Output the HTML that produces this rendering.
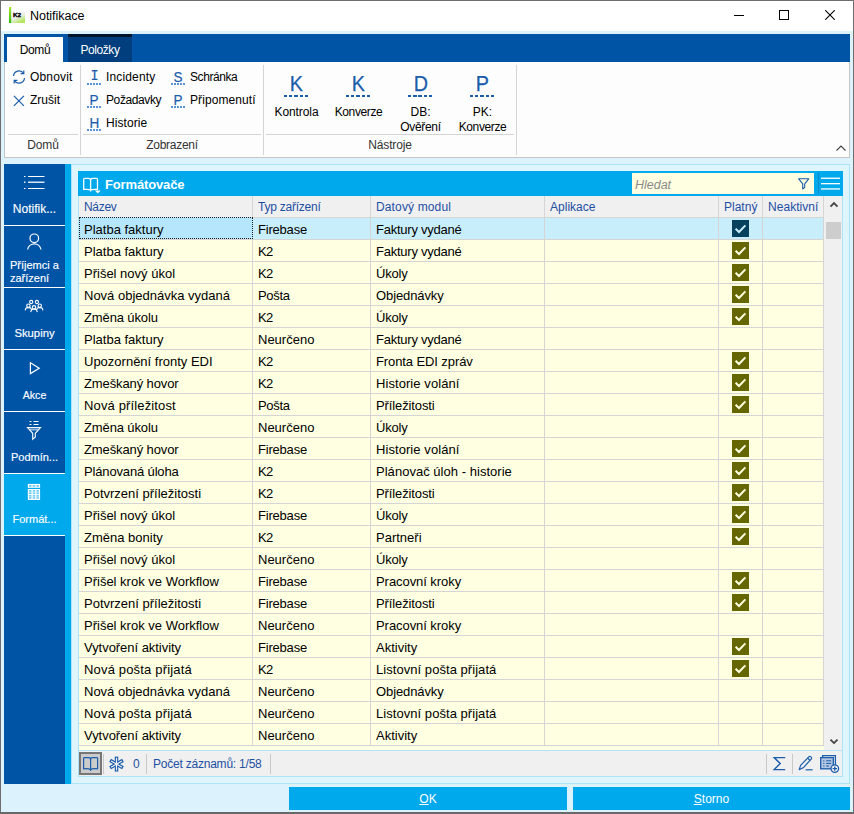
<!DOCTYPE html>
<html lang="cs"><head><meta charset="utf-8"><title>Notifikace</title>
<style>
html,body{margin:0;padding:0;}
body{width:854px;height:814px;overflow:hidden;background:#dcf3fd;font-family:"Liberation Sans",sans-serif;font-size:12px;color:#000;}
#win{position:absolute;left:0;top:0;width:854px;height:814px;background:#dcf3fd;overflow:hidden;}
#win div,#win svg,#win .chk{position:absolute;box-sizing:border-box;}
.t{white-space:nowrap;line-height:14px;}
#bL{left:0;top:0;width:1px;height:814px;background:#6e6e6e;}
#bT{left:0;top:0;width:854px;height:1px;background:#6e6e6e;}
#bR{left:853px;top:0;width:1px;height:814px;background:#6e6e6e;}
#bB{left:0;top:812px;width:854px;height:2px;background:#686868;}
#title{left:1px;top:1px;width:852px;height:30px;background:#fff;}
#ribbar{left:4px;top:34px;width:846px;height:28px;background:#0054a6;}
#tab1{left:3px;top:3px;width:56px;height:25px;background:#fdfdfd;}
#tab2{left:64px;top:0;width:64px;height:28px;background:#003e7e;border-top:3px solid #00142c;}
#ribbon{left:4px;top:62px;width:846px;height:96px;background:#fdfdfd;border:1px solid #c6c6c6;border-top:none;}
.rt{white-space:nowrap;line-height:14px;font-size:12px;color:#000;}
.li{color:#1b5cab;font-size:15px;line-height:14px;width:15px;text-align:center;height:18px;padding-top:2.6px;-webkit-text-stroke:0.2px #1b5cab;background:repeating-linear-gradient(90deg,#5b92d6 0 2px,transparent 2px 3px) left bottom/14px 2px no-repeat;}
.big{top:9px;color:#1b5cab;font-size:22px;line-height:22px;width:25px;text-align:center;height:26px;padding-top:2px;background:repeating-linear-gradient(90deg,#1b5cab 0 3.25px,transparent 3.25px 5.25px) left bottom/24.25px 2px no-repeat;-webkit-text-stroke:0.25px #1b5cab;}
.hs{height:1px;background:#d4d4d4;}
.vs{width:1px;background:#d4d4d4;}
.gl{font-size:12px;color:#333;text-align:center;line-height:14px;white-space:nowrap;}
#side{left:4px;top:164px;width:61px;height:620px;background:#0054a6;}
#sstrip{left:65px;top:164px;width:6px;height:620px;background:#00a8ec;}
.si{left:0;width:61px;height:61px;}
.si.act{background:#00a8ec;}
.ssep{left:0;width:61px;height:1px;background:#fff;}
.sl{left:0;width:61px;text-align:center;color:#fff;-webkit-text-stroke:0.15px #fff;font-size:11.5px;line-height:13px;white-space:nowrap;}
#panel{left:71px;top:164px;width:779px;height:620px;background:#dff5fd;border:1px solid #aee3f8;}
#phead{left:78px;top:171px;width:765px;height:25px;background:#00a8ec;}
#ptitle{left:27px;top:6px;color:#fff;font-weight:bold;font-size:13px;line-height:15px;white-space:nowrap;}
#search{left:554px;top:2px;width:182px;height:21px;background:#ffffe1;}
#search .ph{left:3px;top:5px;font-style:italic;color:#8a8a8a;font-size:12.5px;line-height:15px;}
#grid{left:79px;top:196px;width:745px;height:554px;background:#ffffe1;overflow:hidden;font-size:13px;}
#gl{left:78px;top:196px;width:1px;height:555px;background:#aee3f8;}
.hrow{left:0;top:0;width:745px;height:22px;background:#f0f0f0;border-bottom:1px solid #d5d5d5;}
.hc{top:0;height:21px;border-right:1px solid #d5d5d5;color:#1d4fa3;font-size:12px;line-height:23px;padding-left:5px;white-space:nowrap;overflow:hidden;}
.row{left:0;width:745px;height:22px;border-bottom:1px solid #d5d5d5;}
.row.sel{background:#c9eefb;}
.c{top:0;height:21px;border-right:1px solid #d5d5d5;line-height:23px;padding-left:5px;white-space:nowrap;overflow:hidden;}
.c1{left:0;width:174px;}
.c2{left:174px;width:118px;}
.c3{left:292px;width:174px;}
.c4{left:466px;width:174px;}
.c5{left:640px;width:44px;}
.c6{left:684px;width:61px;}
.chk{left:13px;top:2px;width:17px;height:17px;background:#666600;color:#ffffe1;}
.row.sel .chk{background:#06425e;color:#c9eefb;}
.focus{left:0;top:21px;width:174px;height:22px;border:1px dotted #222;background:#b5e6fb;}
#vscroll{left:824px;top:196px;width:18px;height:554px;background:#f0f0f0;}
#vsb{left:842px;top:196px;width:1px;height:581px;background:#aee3f8;}
#thumb{left:2px;top:26px;width:15px;height:17px;background:#cdcdcd;}
#status{left:78px;top:750px;width:765px;height:27px;background:#f0f0f0;border:1px solid #aee3f8;}
.st{color:#1d4fa3;font-size:12px;line-height:14px;white-space:nowrap;}
.btn{top:787px;height:23px;background:#00a8ec;color:#fff;text-align:center;font-size:12px;line-height:25.5px;}
.vs2{top:3px;width:1px;height:20px;background:#c8c8c8;}
.ft{left:4px;top:0;line-height:23px;white-space:nowrap;}
.lx{display:inline-block;transform:scaleX(0.9);}

</style></head><body>
<div id="win">
<div id="bL"></div><div id="bT"></div><div id="bR"></div><div id="bB"></div>
<div id="title">
  <svg style="left:8px;top:6px" width="17" height="17" viewBox="0 0 17 17"><defs><linearGradient id="kg" x1="0" y1="0" x2="0" y2="1"><stop offset="0" stop-color="#a6e632"/><stop offset="1" stop-color="#34bc0e"/></linearGradient><linearGradient id="kb" x1="0" y1="0" x2="0.6" y2="1"><stop offset="0" stop-color="#ffffff"/><stop offset="0.55" stop-color="#efefef"/><stop offset="1" stop-color="#b4e65a"/></linearGradient></defs><rect x="2" y="4.5" width="14" height="11.5" fill="url(#kb)"/><rect x="0" y="0" width="2.2" height="16" fill="url(#kg)"/><text x="3.9" y="9.9" font-family="Liberation Sans, sans-serif" font-size="6.2" font-weight="bold" fill="#000" stroke="#000" stroke-width="0.35" textLength="8.2" lengthAdjust="spacingAndGlyphs">K2</text></svg>
  <div class="t" style="left:29px;top:8px;font-size:12.5px;line-height:15px;"><span style="letter-spacing:-0.04px">Notifikace</span></div>
  <svg style="left:733px;top:14px" width="12" height="2"><rect width="10" height="1" fill="#000"/></svg>
  <svg style="left:778px;top:9px" width="10" height="10"><rect x="0.5" y="0.5" width="9" height="9" fill="none" stroke="#000"/></svg>
  <svg style="left:824px;top:9px" width="10" height="10"><path d="M0.3 0.3 L9.7 9.7 M9.7 0.3 L0.3 9.7" stroke="#000" stroke-width="1.1" fill="none"/></svg>
</div>
<div id="ribbar">
  <div id="tab1"><div class="t" style="left:0;width:56px;text-align:center;top:6px;font-size:12px;"><span style="letter-spacing:-0.38px">Domů</span></div></div>
  <div id="tab2"><div class="t" style="left:0;width:64px;text-align:center;top:6px;font-size:12px;color:#fff;"><span style="letter-spacing:-0.43px">Položky</span></div></div>
</div>
<div id="ribbon">
  <!-- group Domu -->
  <svg style="left:7px;top:8px" width="14" height="14" viewBox="0 0 14 14"><path d="M1.5 6 A5.5 5.5 0 0 1 11.5 3.2 M12.5 8 A5.5 5.5 0 0 1 2.5 10.8" fill="none" stroke="#1b5cab" stroke-width="1.2"/><path d="M11.8 0.5 V3.6 H8.6 M2.2 13.5 V10.4 H5.4" fill="none" stroke="#1b5cab" stroke-width="1.2"/></svg>
  <div class="rt" style="left:25px;top:8px;"><span style="letter-spacing:0.16px">Obnovit</span></div>
  <svg style="left:8px;top:33px" width="12" height="12" viewBox="0 0 12 12"><path d="M0.9 0.9 L10.9 10.9 M10.9 0.9 L0.9 10.9" stroke="#1b5cab" stroke-width="1.2" fill="none"/></svg>
  <div class="rt" style="left:25px;top:31px;"><span style="letter-spacing:0.0px">Zrušit</span></div>
  <div class="hs" style="left:3px;top:72px;width:70px;"></div>
  <div class="gl" style="left:3px;top:76px;width:70px;"><span style="letter-spacing:-0.1px">Domů</span></div>
  <div class="vs" style="left:75px;top:3px;height:90px;"></div>
  <!-- group Zobrazeni -->
  <div class="li" style="left:82px;top:5px;font-family:'Liberation Mono',monospace;"><span class="lx">I</span></div>
  <div class="rt" style="left:101px;top:8px;"><span style="letter-spacing:0.15px">Incidenty</span></div>
  <div class="li" style="left:82px;top:28px;"><span class="lx">P</span></div>
  <div class="rt" style="left:101px;top:31px;"><span style="letter-spacing:-0.39px">Požadavky</span></div>
  <div class="li" style="left:82px;top:51px;"><span class="lx">H</span></div>
  <div class="rt" style="left:101px;top:54px;"><span style="letter-spacing:0.08px">Historie</span></div>
  <div class="li" style="left:166px;top:5px;"><span class="lx">S</span></div>
  <div class="rt" style="left:185px;top:8px;"><span style="letter-spacing:-0.43px">Schránka</span></div>
  <div class="li" style="left:166px;top:28px;"><span class="lx">P</span></div>
  <div class="rt" style="left:185px;top:31px;"><span style="letter-spacing:0.08px">Připomenutí</span></div>
  <div class="hs" style="left:78px;top:72px;width:178px;"></div>
  <div class="gl" style="left:78px;top:76px;width:178px;"><span style="letter-spacing:-0.27px">Zobrazení</span></div>
  <div class="vs" style="left:258px;top:3px;height:90px;"></div>
  <!-- group Nastroje -->
  <div class="big" style="left:279px;"><span class="lx">K</span></div>
  <div class="rt" style="left:260px;top:43px;width:63px;text-align:center;"><span style="letter-spacing:-0.08px">Kontrola</span></div>
  <div class="big" style="left:341px;"><span class="lx">K</span></div>
  <div class="rt" style="left:322px;top:43px;width:63px;text-align:center;"><span style="letter-spacing:-0.39px">Konverze</span></div>
  <div class="big" style="left:403px;"><span class="lx">D</span></div>
  <div class="rt" style="left:384px;top:43px;width:63px;text-align:center;line-height:15px;">DB:<br><span style="letter-spacing:-0.31px">Ověření</span></div>
  <div class="big" style="left:465px;"><span class="lx">P</span></div>
  <div class="rt" style="left:446px;top:43px;width:63px;text-align:center;line-height:15px;">PK:<br><span style="letter-spacing:-0.39px">Konverze</span></div>
  <div class="hs" style="left:261px;top:72px;width:248px;"></div>
  <div class="gl" style="left:261px;top:76px;width:248px;"><span style="letter-spacing:-0.17px">Nástroje</span></div>
  <div class="vs" style="left:511px;top:3px;height:90px;"></div>
  <svg style="left:831px;top:83px" width="10" height="6" viewBox="0 0 10 6"><path d="M0.5 5.5 L5 1 L9.5 5.5" fill="none" stroke="#444" stroke-width="1.1"/></svg>
</div>
<div id="side">
  <div class="si" style="top:0"></div><div class="ssep" style="top:61px"></div>
  <div class="si" style="top:62px"></div><div class="ssep" style="top:123px"></div>
  <div class="si" style="top:124px"></div><div class="ssep" style="top:185px"></div>
  <div class="si" style="top:186px"></div><div class="ssep" style="top:247px"></div>
  <div class="si" style="top:248px"></div><div class="ssep" style="top:309px"></div>
  <div class="si act" style="top:310px"></div><div class="ssep" style="top:371px"></div>
  <!-- list icon -->
  <svg style="left:19px;top:10px" width="24" height="16" viewBox="0 0 24 16"><g fill="#fff"><rect x="1" y="2" width="1.5" height="1"/><rect x="5" y="2" width="16.5" height="1"/><rect x="1" y="7.5" width="1.5" height="1.5" opacity=".85"/><rect x="5" y="7.5" width="16.5" height="1.5" opacity=".85"/><rect x="1" y="14" width="1.5" height="1"/><rect x="5" y="14" width="16.5" height="1"/></g></svg>
  <div class="sl" style="top:39px;font-size:12px;">Notifik...</div>
  <!-- person -->
  <svg style="left:20px;top:66px" width="22" height="22" viewBox="0 0 22 22"><circle cx="10.3" cy="8.3" r="4.3" fill="none" stroke="#fff" stroke-width="1.2"/><path d="M3.6 19.5 A6.8 6.8 0 0 1 17 19.5" fill="none" stroke="#fff" stroke-width="1.2"/></svg>
  <div class="sl" style="top:95px;text-align:left;left:6px;font-size:11px;">Příjemci a<br>zařízení</div>
  <!-- group -->
  <svg style="left:20px;top:134px" width="22" height="16" viewBox="0 0 22 16"><g fill="none" stroke="#fff" stroke-width="1.1"><circle cx="7.2" cy="4" r="1.6"/><circle cx="12.9" cy="4" r="1.6"/><circle cx="4.4" cy="7.7" r="1.7"/><path d="M1.1000000000000005 12.4 C1.8000000000000003 9.8 2.0000000000000004 9.6 4.4 9.6 C6.800000000000001 9.6 7.0 9.8 7.7 12.4"/><circle cx="15.7" cy="7.7" r="1.7"/><path d="M12.399999999999999 12.4 C13.1 9.8 13.299999999999999 9.6 15.7 9.6 C18.099999999999998 9.6 18.3 9.8 19.0 12.4"/><circle cx="10" cy="9.3" r="1.7"/><path d="M6.7 14.2 C7.4 11.6 7.6 11.200000000000001 10 11.200000000000001 C12.4 11.200000000000001 12.6 11.6 13.3 14.2"/></g></svg>
  <div class="sl" style="top:163px;font-size:11.3px;">Skupiny</div>
  <!-- play -->
  <svg style="left:24px;top:196px" width="14" height="16" viewBox="0 0 14 16"><path d="M2.4 2.8 L11.2 8.2 L2.4 13.6 Z" fill="none" stroke="#fff" stroke-width="1.2" stroke-linejoin="miter"/></svg>
  <div class="sl" style="top:225px;font-size:10.6px;">Akce</div>
  <!-- filter -->
  <svg style="left:22px;top:255px" width="16" height="22" viewBox="0 0 16 22"><g fill="#fff"><rect x="3.5" y="2" width="2" height="1"/><rect x="7.5" y="2" width="5" height="1"/><rect x="3.5" y="5" width="2" height="1"/><rect x="7.5" y="5" width="5" height="1"/></g><path d="M1.5 8.5 H14.5 L9.3 14.3 V18 L6.7 20.2 V14.3 Z" fill="none" stroke="#fff" stroke-width="1.1"/><path d="M2.8 9.5 H13.2 L11.4 11.5 H4.6 Z" fill="#fff" opacity=".6"/></svg>
  <div class="sl" style="top:287px;font-size:11px;">Podmín...</div>
  <!-- table -->
  <svg style="left:23px;top:319px" width="15" height="18" viewBox="0 0 15 18"><rect x="0.8" y="0.9" width="12.3" height="3.9" fill="#fff"/><rect x="0.8" y="6" width="12.3" height="11" fill="#fff"/><g fill="#00a8ec"><rect x="2.0" y="2" width="2.5" height="1.8" opacity=".6"/><rect x="2.0" y="7" width="2.5" height="1.8" opacity=".55"/><rect x="2.0" y="9.6" width="2.5" height="1" opacity=".95"/><rect x="2.0" y="11.9" width="2.5" height="1.8" opacity=".55"/><rect x="2.0" y="14.5" width="2.5" height="1" opacity=".95"/><rect x="5.7" y="2" width="2.5" height="1.8" opacity=".6"/><rect x="5.7" y="7" width="2.5" height="1.8" opacity=".55"/><rect x="5.7" y="9.6" width="2.5" height="1" opacity=".95"/><rect x="5.7" y="11.9" width="2.5" height="1.8" opacity=".55"/><rect x="5.7" y="14.5" width="2.5" height="1" opacity=".95"/><rect x="9.4" y="2" width="2.5" height="1.8" opacity=".6"/><rect x="9.4" y="7" width="2.5" height="1.8" opacity=".55"/><rect x="9.4" y="9.6" width="2.5" height="1" opacity=".95"/><rect x="9.4" y="11.9" width="2.5" height="1.8" opacity=".55"/><rect x="9.4" y="14.5" width="2.5" height="1" opacity=".95"/></g></svg>
  <div class="sl" style="top:349px;font-size:11px;">Formát...</div>
</div>
<div id="sstrip"></div>
<div id="panel"></div>
<div id="phead">
  <svg style="left:4px;top:5px" width="20" height="19" viewBox="0 0 20 19"><path d="M1.7 3.4 C1.7 2.8 2.1 2.4 2.7 2.4 H6.6 C7.8 2.4 8.6 3.2 8.6 4.4 V14 C7.6 13.3 6 13.2 1.7 13.4 Z M8.6 4.4 C8.6 3.2 9.4 2.4 10.6 2.4 H14.5 C15.1 2.4 15.5 2.8 15.5 3.4 V13.4 C11.2 13.2 9.6 13.3 8.6 14 M8.6 14 V15.4" fill="none" stroke="#fff" stroke-width="1.3" stroke-linejoin="round"/><path d="M12.9 14.5 H18.7 L15.8 17.6 Z" fill="#fff"/></svg>
  <div id="ptitle"><span style="letter-spacing:-0.14px">Formátovače</span></div>
  <div id="search"><div class="ph"><span style="letter-spacing:-0.02px">Hledat</span></div>
    <svg style="left:165px;top:4px" width="13" height="13" viewBox="0 0 13 13"><path d="M1.7 1.8 H11.7 L7.7 6.8 V10.4 L5.7 12 V6.8 Z" fill="none" stroke="#1b5cab" stroke-width="1.1" stroke-linejoin="round"/></svg>
  </div>
  <div style="left:740px;top:2px;width:1px;height:21px;background:#0c8acb"></div>
  <svg style="left:743px;top:6px" width="20" height="14" viewBox="0 0 20 14"><g fill="#fff"><rect x="0" y="0.6" width="19" height="1.3"/><rect x="0" y="6" width="19" height="1.3"/><rect x="0" y="11.3" width="19" height="1.3"/></g></svg>
</div>
<div id="grid">
<div class="hrow"><div class="hc" style="left:0;width:174px"><span style="letter-spacing:-0.3px">Název</span></div><div class="hc" style="left:174px;width:118px"><span style="letter-spacing:-0.24px">Typ zařízení</span></div><div class="hc" style="left:292px;width:174px"><span style="letter-spacing:0.14px">Datový modul</span></div><div class="hc" style="left:466px;width:174px"><span style="letter-spacing:0.02px">Aplikace</span></div><div class="hc" style="left:640px;width:44px"><span style="letter-spacing:0.01px">Platný</span></div><div class="hc" style="left:684px;width:61px"><span style="letter-spacing:0.05px">Neaktivní</span></div></div>
<div class="row sel" style="top:22px"><div class="c c1">Platba faktury</div><div class="c c2"><span style="letter-spacing:-0.2px">Firebase</span></div><div class="c c3"><span style="letter-spacing:-0.24px">Faktury vydané</span></div><div class="c c4"></div><div class="c c5"><span class="chk"><svg viewBox="0 0 17 17" width="17" height="17"><path d="M3.6 8.8 L7 12 L13.4 5.4" fill="none" stroke="currentColor" stroke-width="2"/></svg></span></div><div class="c c6"></div></div>
<div class="row" style="top:44px"><div class="c c1">Platba faktury</div><div class="c c2"><span style="letter-spacing:-0.65px">K2</span></div><div class="c c3"><span style="letter-spacing:-0.24px">Faktury vydané</span></div><div class="c c4"></div><div class="c c5"><span class="chk"><svg viewBox="0 0 17 17" width="17" height="17"><path d="M3.6 8.8 L7 12 L13.4 5.4" fill="none" stroke="currentColor" stroke-width="2"/></svg></span></div><div class="c c6"></div></div>
<div class="row" style="top:66px"><div class="c c1">Přišel nový úkol</div><div class="c c2"><span style="letter-spacing:-0.65px">K2</span></div><div class="c c3"><span style="letter-spacing:-0.2px">Úkoly</span></div><div class="c c4"></div><div class="c c5"><span class="chk"><svg viewBox="0 0 17 17" width="17" height="17"><path d="M3.6 8.8 L7 12 L13.4 5.4" fill="none" stroke="currentColor" stroke-width="2"/></svg></span></div><div class="c c6"></div></div>
<div class="row" style="top:88px"><div class="c c1">Nová objednávka vydaná</div><div class="c c2"><span style="letter-spacing:-0.32px">Pošta</span></div><div class="c c3"><span style="letter-spacing:-0.1px">Objednávky</span></div><div class="c c4"></div><div class="c c5"><span class="chk"><svg viewBox="0 0 17 17" width="17" height="17"><path d="M3.6 8.8 L7 12 L13.4 5.4" fill="none" stroke="currentColor" stroke-width="2"/></svg></span></div><div class="c c6"></div></div>
<div class="row" style="top:110px"><div class="c c1"><span style="letter-spacing:-0.12px">Změna úkolu</span></div><div class="c c2"><span style="letter-spacing:-0.65px">K2</span></div><div class="c c3"><span style="letter-spacing:-0.2px">Úkoly</span></div><div class="c c4"></div><div class="c c5"><span class="chk"><svg viewBox="0 0 17 17" width="17" height="17"><path d="M3.6 8.8 L7 12 L13.4 5.4" fill="none" stroke="currentColor" stroke-width="2"/></svg></span></div><div class="c c6"></div></div>
<div class="row" style="top:132px"><div class="c c1">Platba faktury</div><div class="c c2">Neurčeno</div><div class="c c3"><span style="letter-spacing:-0.24px">Faktury vydané</span></div><div class="c c4"></div><div class="c c5"></div><div class="c c6"></div></div>
<div class="row" style="top:154px"><div class="c c1">Upozornění fronty EDI</div><div class="c c2"><span style="letter-spacing:-0.65px">K2</span></div><div class="c c3"><span style="letter-spacing:-0.1px">Fronta EDI zpráv</span></div><div class="c c4"></div><div class="c c5"><span class="chk"><svg viewBox="0 0 17 17" width="17" height="17"><path d="M3.6 8.8 L7 12 L13.4 5.4" fill="none" stroke="currentColor" stroke-width="2"/></svg></span></div><div class="c c6"></div></div>
<div class="row" style="top:176px"><div class="c c1"><span style="letter-spacing:-0.11px">Zmeškaný hovor</span></div><div class="c c2"><span style="letter-spacing:-0.65px">K2</span></div><div class="c c3"><span style="letter-spacing:0.07px">Historie volání</span></div><div class="c c4"></div><div class="c c5"><span class="chk"><svg viewBox="0 0 17 17" width="17" height="17"><path d="M3.6 8.8 L7 12 L13.4 5.4" fill="none" stroke="currentColor" stroke-width="2"/></svg></span></div><div class="c c6"></div></div>
<div class="row" style="top:198px"><div class="c c1"><span style="letter-spacing:0.14px">Nová příležitost</span></div><div class="c c2"><span style="letter-spacing:-0.32px">Pošta</span></div><div class="c c3"><span style="letter-spacing:-0.11px">Příležitosti</span></div><div class="c c4"></div><div class="c c5"><span class="chk"><svg viewBox="0 0 17 17" width="17" height="17"><path d="M3.6 8.8 L7 12 L13.4 5.4" fill="none" stroke="currentColor" stroke-width="2"/></svg></span></div><div class="c c6"></div></div>
<div class="row" style="top:220px"><div class="c c1"><span style="letter-spacing:-0.12px">Změna úkolu</span></div><div class="c c2">Neurčeno</div><div class="c c3"><span style="letter-spacing:-0.2px">Úkoly</span></div><div class="c c4"></div><div class="c c5"></div><div class="c c6"></div></div>
<div class="row" style="top:242px"><div class="c c1"><span style="letter-spacing:-0.11px">Zmeškaný hovor</span></div><div class="c c2"><span style="letter-spacing:-0.2px">Firebase</span></div><div class="c c3"><span style="letter-spacing:0.07px">Historie volání</span></div><div class="c c4"></div><div class="c c5"><span class="chk"><svg viewBox="0 0 17 17" width="17" height="17"><path d="M3.6 8.8 L7 12 L13.4 5.4" fill="none" stroke="currentColor" stroke-width="2"/></svg></span></div><div class="c c6"></div></div>
<div class="row" style="top:264px"><div class="c c1"><span style="letter-spacing:-0.15px">Plánovaná úloha</span></div><div class="c c2"><span style="letter-spacing:-0.65px">K2</span></div><div class="c c3"><span style="letter-spacing:0.03px">Plánovač úloh - historie</span></div><div class="c c4"></div><div class="c c5"><span class="chk"><svg viewBox="0 0 17 17" width="17" height="17"><path d="M3.6 8.8 L7 12 L13.4 5.4" fill="none" stroke="currentColor" stroke-width="2"/></svg></span></div><div class="c c6"></div></div>
<div class="row" style="top:286px"><div class="c c1">Potvrzení příležitosti</div><div class="c c2"><span style="letter-spacing:-0.65px">K2</span></div><div class="c c3"><span style="letter-spacing:-0.11px">Příležitosti</span></div><div class="c c4"></div><div class="c c5"><span class="chk"><svg viewBox="0 0 17 17" width="17" height="17"><path d="M3.6 8.8 L7 12 L13.4 5.4" fill="none" stroke="currentColor" stroke-width="2"/></svg></span></div><div class="c c6"></div></div>
<div class="row" style="top:308px"><div class="c c1">Přišel nový úkol</div><div class="c c2"><span style="letter-spacing:-0.2px">Firebase</span></div><div class="c c3"><span style="letter-spacing:-0.2px">Úkoly</span></div><div class="c c4"></div><div class="c c5"><span class="chk"><svg viewBox="0 0 17 17" width="17" height="17"><path d="M3.6 8.8 L7 12 L13.4 5.4" fill="none" stroke="currentColor" stroke-width="2"/></svg></span></div><div class="c c6"></div></div>
<div class="row" style="top:330px"><div class="c c1">Změna bonity</div><div class="c c2"><span style="letter-spacing:-0.65px">K2</span></div><div class="c c3">Partneři</div><div class="c c4"></div><div class="c c5"><span class="chk"><svg viewBox="0 0 17 17" width="17" height="17"><path d="M3.6 8.8 L7 12 L13.4 5.4" fill="none" stroke="currentColor" stroke-width="2"/></svg></span></div><div class="c c6"></div></div>
<div class="row" style="top:352px"><div class="c c1">Přišel nový úkol</div><div class="c c2">Neurčeno</div><div class="c c3"><span style="letter-spacing:-0.2px">Úkoly</span></div><div class="c c4"></div><div class="c c5"></div><div class="c c6"></div></div>
<div class="row" style="top:374px"><div class="c c1">Přišel krok ve Workflow</div><div class="c c2"><span style="letter-spacing:-0.2px">Firebase</span></div><div class="c c3"><span style="letter-spacing:-0.06px">Pracovní kroky</span></div><div class="c c4"></div><div class="c c5"><span class="chk"><svg viewBox="0 0 17 17" width="17" height="17"><path d="M3.6 8.8 L7 12 L13.4 5.4" fill="none" stroke="currentColor" stroke-width="2"/></svg></span></div><div class="c c6"></div></div>
<div class="row" style="top:396px"><div class="c c1">Potvrzení příležitosti</div><div class="c c2"><span style="letter-spacing:-0.2px">Firebase</span></div><div class="c c3"><span style="letter-spacing:-0.11px">Příležitosti</span></div><div class="c c4"></div><div class="c c5"><span class="chk"><svg viewBox="0 0 17 17" width="17" height="17"><path d="M3.6 8.8 L7 12 L13.4 5.4" fill="none" stroke="currentColor" stroke-width="2"/></svg></span></div><div class="c c6"></div></div>
<div class="row" style="top:418px"><div class="c c1">Přišel krok ve Workflow</div><div class="c c2">Neurčeno</div><div class="c c3"><span style="letter-spacing:-0.06px">Pracovní kroky</span></div><div class="c c4"></div><div class="c c5"></div><div class="c c6"></div></div>
<div class="row" style="top:440px"><div class="c c1"><span style="letter-spacing:-0.04px">Vytvoření aktivity</span></div><div class="c c2"><span style="letter-spacing:-0.2px">Firebase</span></div><div class="c c3">Aktivity</div><div class="c c4"></div><div class="c c5"><span class="chk"><svg viewBox="0 0 17 17" width="17" height="17"><path d="M3.6 8.8 L7 12 L13.4 5.4" fill="none" stroke="currentColor" stroke-width="2"/></svg></span></div><div class="c c6"></div></div>
<div class="row" style="top:462px"><div class="c c1"><span style="letter-spacing:0.17px">Nová pošta přijatá</span></div><div class="c c2"><span style="letter-spacing:-0.65px">K2</span></div><div class="c c3"><span style="letter-spacing:0.05px">Listovní pošta přijatá</span></div><div class="c c4"></div><div class="c c5"><span class="chk"><svg viewBox="0 0 17 17" width="17" height="17"><path d="M3.6 8.8 L7 12 L13.4 5.4" fill="none" stroke="currentColor" stroke-width="2"/></svg></span></div><div class="c c6"></div></div>
<div class="row" style="top:484px"><div class="c c1">Nová objednávka vydaná</div><div class="c c2">Neurčeno</div><div class="c c3"><span style="letter-spacing:-0.1px">Objednávky</span></div><div class="c c4"></div><div class="c c5"></div><div class="c c6"></div></div>
<div class="row" style="top:506px"><div class="c c1"><span style="letter-spacing:0.17px">Nová pošta přijatá</span></div><div class="c c2">Neurčeno</div><div class="c c3"><span style="letter-spacing:0.05px">Listovní pošta přijatá</span></div><div class="c c4"></div><div class="c c5"></div><div class="c c6"></div></div>
<div class="row" style="top:528px"><div class="c c1"><span style="letter-spacing:-0.04px">Vytvoření aktivity</span></div><div class="c c2">Neurčeno</div><div class="c c3">Aktivity</div><div class="c c4"></div><div class="c c5"></div><div class="c c6"></div></div>
<div class="focus"><div class="ft">Platba faktury</div></div>
</div><div id="vscroll"><div id="thumb"></div>
  <svg style="left:5px;top:4px" width="10" height="8" viewBox="0 0 10 8"><path d="M1.5 6.6 L5 3.1 L8.5 6.6" fill="none" stroke="#444" stroke-width="1.8"/></svg>
  <svg style="left:5px;top:542px" width="10" height="8" viewBox="0 0 10 8"><path d="M1.5 1.6 L5 5.1 L8.5 1.6" fill="none" stroke="#444" stroke-width="1.8"/></svg>
</div>
<div id="vsb"></div><div id="gl"></div>
<div id="status">
  <div style="left:0px;top:1px;width:23px;height:23px;background:#cbcbcb;border:2px solid #767676;"></div>
  <svg style="left:3px;top:5px" width="18" height="16" viewBox="0 0 18 16"><path d="M1.6 2.4 C1.6 1.8 2 1.6 2.6 1.6 H6.4 C7.6 1.6 8.6 2.2 8.6 3.4 V13.6 C7.4 12.6 4 12.6 1.6 12.8 Z M8.6 3.4 C8.6 2.2 9.6 1.6 10.8 1.6 H14.6 C15.2 1.6 15.6 1.8 15.6 2.4 V12.8 C13.2 12.6 9.8 12.6 8.6 13.6 M8.6 13.6 V15" fill="none" stroke="#1b5cab" stroke-width="1.2" stroke-linejoin="round"/></svg>
  <div class="vs2" style="left:24px;"></div>
  <svg style="left:29px;top:5px" width="17" height="17" viewBox="0 0 17 17"><g transform="translate(8.5,8.1)"><g fill="#1b5cab" stroke="#1b5cab" stroke-width="2.3" stroke-linejoin="miter"><rect x="-0.6" y="-6.3" width="1.2" height="12.6"/><rect x="-0.6" y="-6.3" width="1.2" height="12.6" transform="rotate(60)"/><rect x="-0.6" y="-6.3" width="1.2" height="12.6" transform="rotate(120)"/></g><g fill="#f0f0f0"><rect x="-0.6" y="-6.3" width="1.2" height="12.6"/><rect x="-0.6" y="-6.3" width="1.2" height="12.6" transform="rotate(60)"/><rect x="-0.6" y="-6.3" width="1.2" height="12.6" transform="rotate(120)"/></g></g></svg>
  <div class="st" style="left:54px;top:6px;">0</div>
  <div class="vs2" style="left:67px;"></div>
  <div class="st" style="left:74px;top:6px;"><span style="letter-spacing:-0.22px">Počet záznamů: 1/58</span></div>
  <div class="vs2" style="left:191px;"></div>
  <div class="vs2" style="left:687px;"></div>
  <svg style="left:693px;top:4px" width="16" height="17" viewBox="0 0 16 17"><path d="M13.2 2.6 H2.2 L8.2 8.6 L2.2 14.6 H13.2" fill="none" stroke="#1b5cab" stroke-width="1.4" stroke-linejoin="miter"/></svg>
  <div class="vs2" style="left:713px;"></div>
  <svg style="left:718px;top:3px" width="18" height="18" viewBox="0 0 18 18"><g fill="none" stroke="#1b5cab" stroke-width="1.2" stroke-linejoin="round"><path d="M2.2 15.6 L3.6 11.4 L12 2.6 C13 1.6 15.2 3.6 14.4 4.8 L6.2 13.8 Z"/><path d="M10.6 4 L13 6.4"/><path d="M8.6 15.8 H15.6"/></g></svg>
  <svg style="left:740px;top:3px" width="22" height="20" viewBox="0 0 22 20"><g fill="none" stroke="#1b5cab" stroke-width="1.3"><path d="M3.6 3.4 V1.7 H16.4 V11"/><rect x="1.7" y="3.6" width="12.6" height="11.2" fill="#7fa3d6" fill-opacity=".55"/><path d="M4.2 6.8 H5.4 M7.2 6.8 H12.2 M4.2 9.4 H5.4 M7.2 9.4 H12.2 M4.2 12 H5.4 M7.2 12 H10" stroke-width="1"/><circle cx="15.8" cy="14.6" r="3.8" fill="#f0f0f0"/><path d="M15.8 12.4 V16.8 M13.6 14.6 H18"/></g></svg>
</div>
<div class="btn" style="left:289px;width:278px;"><u>O</u>K</div>
<div class="btn" style="left:573px;width:277px;"><u>S</u>torno</div>

</div>
</body></html>
